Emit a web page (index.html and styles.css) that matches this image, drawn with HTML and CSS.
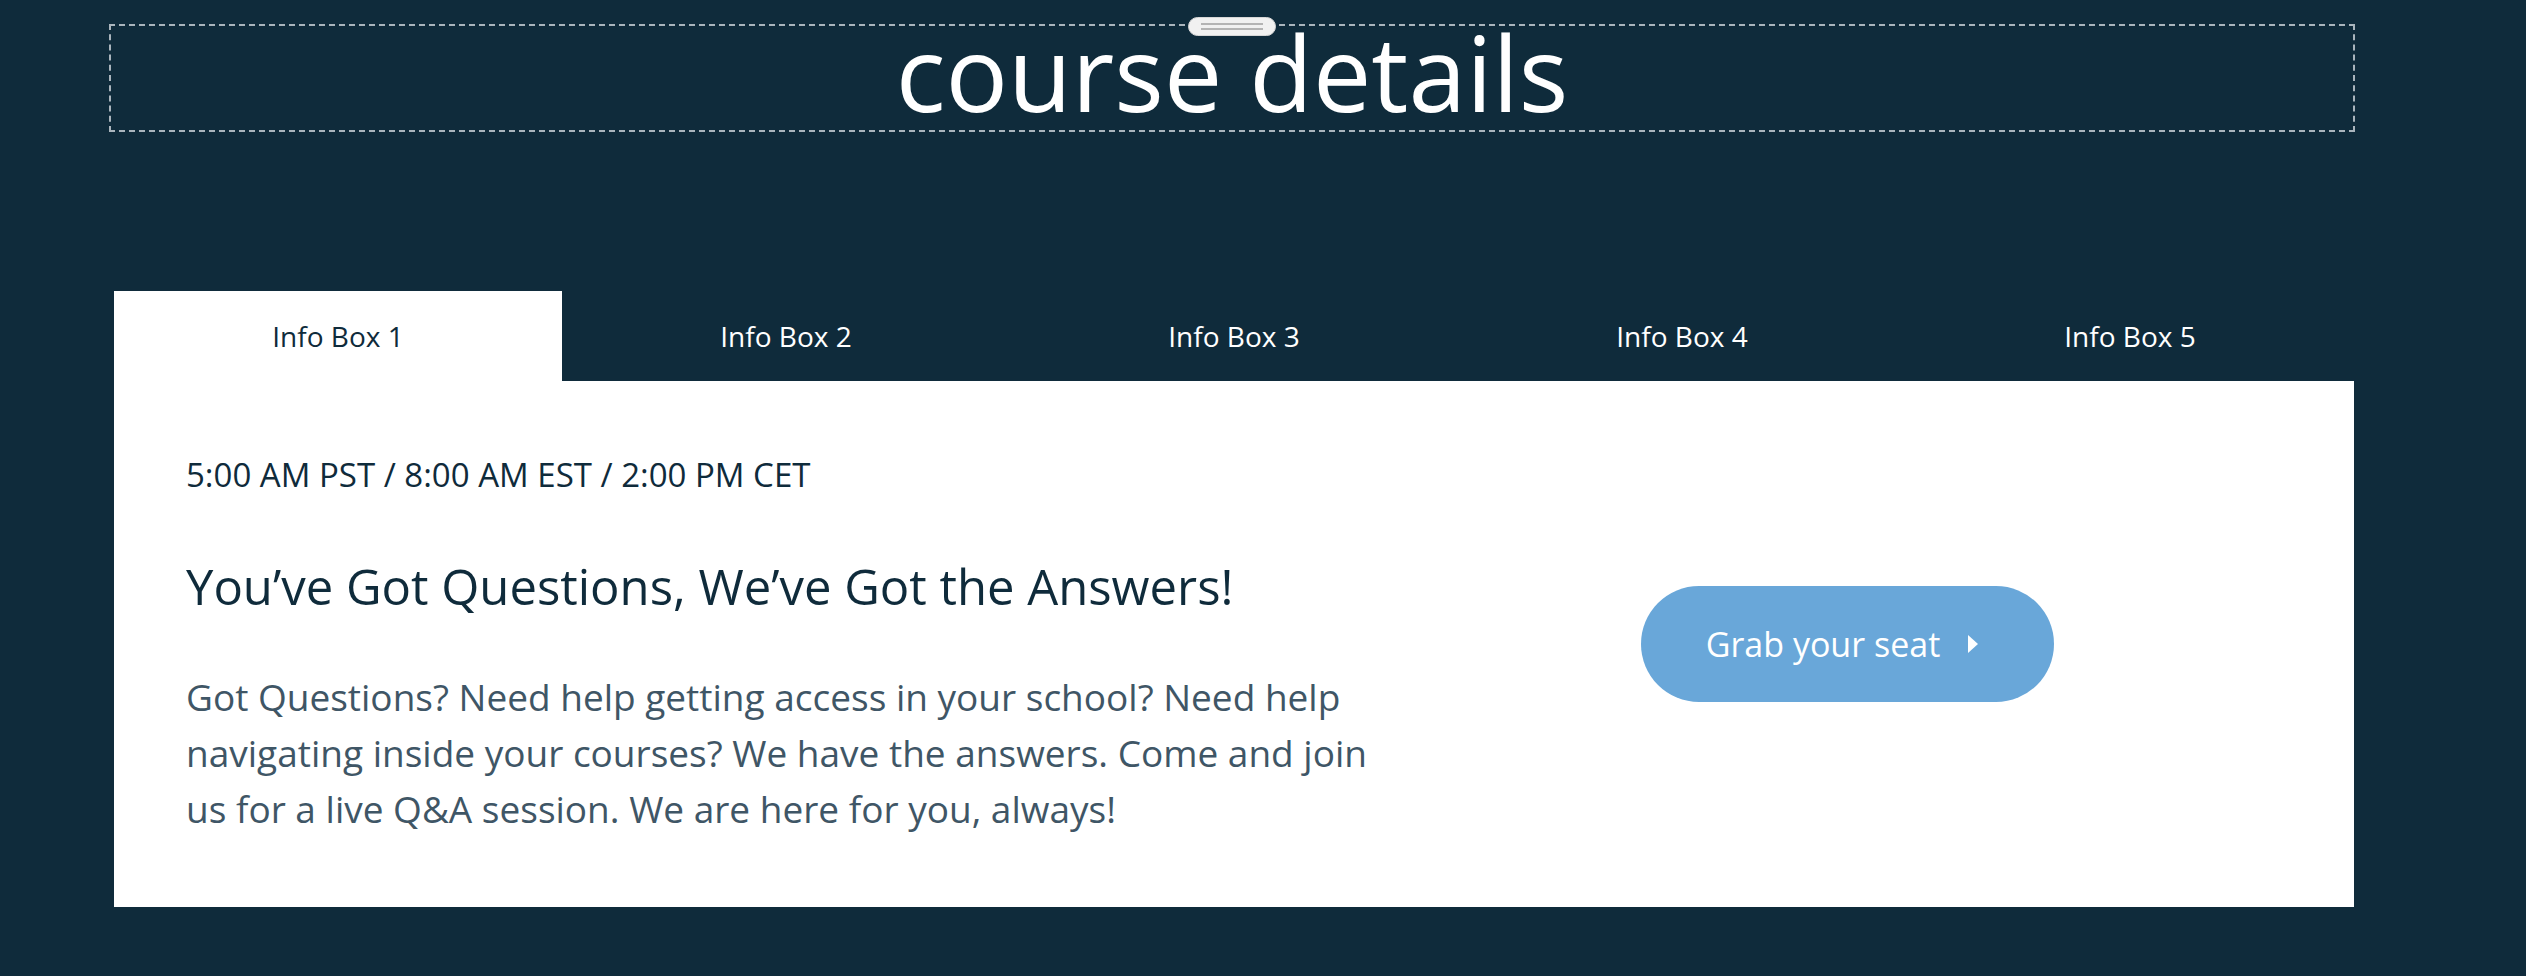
FILE: index.html
```html
<!DOCTYPE html>
<html lang="en">
<head>
<meta charset="utf-8">
<title>Course details</title>
<link rel="stylesheet" href="styles.css">
</head>
<body>
<div class="page">
  <header class="title-box">
    <span class="handle"><span class="handle-line"></span><span class="handle-line"></span></span>
    <h1 class="title">course details</h1>
  </header>

  <section class="tabs">
    <nav class="tab-list">
      <button class="tab tab-active">Info Box 1</button>
      <button class="tab">Info Box 2</button>
      <button class="tab">Info Box 3</button>
      <button class="tab">Info Box 4</button>
      <button class="tab">Info Box 5</button>
    </nav>
    <div class="panel">
      <div class="panel-text">
        <p class="time">5:00 AM PST / 8:00 AM EST / 2:00 PM CET</p>
        <h2 class="heading">You’ve Got Questions, We’ve Got the Answers!</h2>
        <p class="desc">Got Questions? Need help getting access in your school? Need help navigating inside your courses? We have the answers. Come and join us for a live Q&amp;A session. We are here for you, always!</p>
      </div>
      <div class="panel-cta">
        <a class="btn" href="#">Grab your seat
          <svg class="btn-icon" width="10" height="18" viewBox="0 0 10 18"><path d="M0 0 L10 9 L0 18 Z" fill="#ffffff"/></svg>
        </a>
      </div>
    </div>
  </section>
</div>
</body>
</html>
```

FILE: styles.css
```css
html, body {
  margin: 0;
  padding: 0;
  background: #0f2b3b;
  font-family: "Open Sans", "Liberation Sans", sans-serif;
}

.page {
  width: 2240px;
  margin-left: 114px;
  padding-top: 24px;
  padding-bottom: 69px;
}

.title-box {
  position: relative;
  margin: 0 -1px 0 -5px;
  height: 108px;
  border: 2px dashed #aab5bd;
  display: flex;
  align-items: flex-start;
  justify-content: center;
  box-sizing: border-box;
}

.handle {
  position: absolute;
  top: -9px;
  left: 50%;
  margin-left: -44px;
  width: 88px;
  height: 19px;
  box-sizing: border-box;
  background: #f1f1f1;
  border: 1px solid #d6d6d6;
  border-radius: 10px;
  display: flex;
  flex-direction: column;
  justify-content: center;
  align-items: center;
  gap: 3px;
}

.handle-line {
  display: block;
  width: 62px;
  height: 2px;
  background: #b4b4b4;
}

.title {
  margin: 0;
  margin-top: -14px;
  font-size: 104px;
  font-weight: 400;
  line-height: 120px;
  color: #ffffff;
}

.tabs {
  margin-top: 159px;
}

.tab-list {
  display: flex;
  height: 90px;
}

.tab {
  flex: 1;
  border: 0;
  margin: 0;
  padding: 0;
  background: transparent;
  color: #ffffff;
  font-family: "Open Sans", "Liberation Sans", sans-serif;
  font-size: 28px;
  font-weight: 400;
}

.tab-active {
  background: #ffffff;
  color: #0f2b3b;
}

.panel {
  background: #ffffff;
  height: 526px;
  box-sizing: border-box;
  padding: 0 72px;
  display: flex;
  align-items: stretch;
}

.panel-text {
  width: 1195px;
  padding-top: 72px;
}

.time {
  margin: 0;
  font-size: 33px;
  line-height: 44px;
  color: #0f2b3b;
}

.heading {
  margin: 59px 0 0;
  font-size: 49px;
  font-weight: 400;
  line-height: 60px;
  color: #0f2b3b;
}

.desc {
  margin: 53px 0 0;
  font-size: 37px;
  line-height: 56px;
  color: #3f5666;
}

.panel-cta {
  flex: 1;
  display: flex;
  align-items: center;
  justify-content: center;
  padding-left: 31px;
}

.btn {
  display: flex;
  align-items: center;
  justify-content: center;
  gap: 28px;
  width: 413px;
  height: 116px;
  box-sizing: border-box;
  border-radius: 58px;
  background: #69a7d9;
  color: #ffffff;
  text-decoration: none;
  font-size: 34px;
  padding-right: 10px;
}

.btn-icon {
  display: block;
}
```
